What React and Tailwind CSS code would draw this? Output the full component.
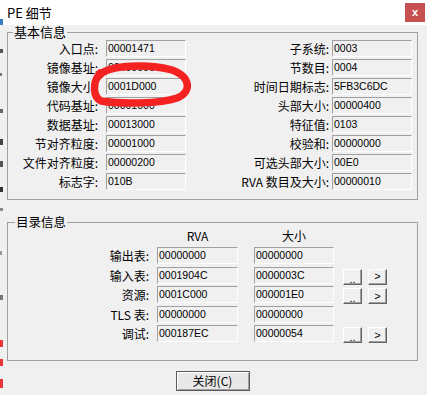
const cjk = { fontFamily: '"Noto Sans CJK SC", "Liberation Sans", sans-serif' };
const num = { fontFamily: '"Liberation Sans", Arial, sans-serif' };

const basic = [
  ["入口点:", "00001471", "子系统:", "0003"],
  ["镜像基址:", "00400000", "节数目:", "0004"],
  ["镜像大小:", "0001D000", "时间日期标志:", "5FB3C6DC"],
  ["代码基址:", "00001000", "头部大小:", "00000400"],
  ["数据基址:", "00013000", "特征值:", "0103"],
  ["节对齐粒度:", "00001000", "校验和:", "00000000"],
  ["文件对齐粒度:", "00000200", "可选头部大小:", "00E0"],
  ["标志字:", "010B", "RVA 数目及大小:", "00000010"],
];

const dirs = [
  { name: "输出表:", rva: "00000000", size: "00000000", btn: false },
  { name: "输入表:", rva: "0001904C", size: "0000003C", btn: true },
  { name: "资源:", rva: "0001C000", size: "000001E0", btn: true },
  { name: "TLS 表:", rva: "00000000", size: "00000000", btn: false },
  { name: "调试:", rva: "000187EC", size: "00000054", btn: true },
];

function Field({ value, w = "w-[80px]" }) {
  return (
    <div
      className={`${w} h-[17px] shrink-0 bg-[#f0f0f0] border-t border-l border-[#a0a0a0] border-r-white border-b-white border-r border-b pl-[1px] text-[10.5px] leading-[15px] text-black`}
      style={num}
    >
      {value}
    </div>
  );
}

function SmallButton({ children, dots }) {
  return (
    <div
      className={`w-[19px] h-[16px] shrink-0 bg-[#f0f0f0] border border-t-white border-l-white border-b-[#646464] border-r-[#646464] shadow-[inset_-1px_-1px_0_#a0a0a0] flex justify-center text-[11px] text-black ${
        dots ? "items-end leading-[10px]" : "items-center leading-none"
      }`}
      style={num}
    >
      {children}
    </div>
  );
}

export default function App() {
  return (
    <div className="relative w-[427px] h-[395px] bg-[#f0f0f0] flex overflow-hidden" style={cjk}>
      {/* bits of the window behind */}
      <div className="w-[5px] shrink-0 flex flex-col bg-[#f0f0f0]">
        <div className="h-[25px] bg-white flex flex-col">
          <div className="mt-[19px] w-[3px] h-[6px] bg-[#3a7bc8]" />
        </div>
        <div className="mt-[24px] w-[3px] h-[4px] bg-[#555]" />
        <div className="mt-[20px] w-[2px] h-[3px] bg-[#777]" />
        <div className="mt-[33px] w-[3px] h-[4px] bg-[#666]" />
        <div className="mt-[26px] w-[3px] h-[6px] bg-[#444]" />
        <div className="mt-[16px] w-[3px] h-[6px] bg-[#555]" />
        <div className="mt-[20px] w-[3px] h-[5px] bg-[#333]" />
        <div className="mt-[16px] w-[3px] h-[3px] bg-[#888]" />
        <div className="mt-[40px] w-[2px] h-[4px] bg-[#999]" />
        <div className="mt-[40px] w-[3px] h-[5px] bg-[#777]" />
        <div className="mt-[40px] w-[3px] h-[7px] bg-[#e8383b]" />
        <div className="mt-[12px] w-[3px] h-[7px] bg-[#e8383b]" />
        <div className="mt-[13px] w-[3px] h-[9px] bg-[#e8383b]" />
      </div>

      <div className="flex-1 flex flex-col">
        {/* title bar */}
        <div className="h-[25px] bg-white flex items-center justify-between pl-[2px] pr-[2px]">
          <span className="text-[13px] text-black leading-none">PE 细节</span>
          <div className="w-[20px] h-[19px] bg-[#c75050] flex items-center justify-center text-white text-[11px] font-bold leading-none" style={num}>
            x
          </div>
        </div>

        <div className="pl-[2px] pr-[9px] flex flex-col">
          {/* 基本信息 */}
          <fieldset className="border border-[#a0a0a0] p-0 m-0">
            <legend className="ml-[5px] px-[1px] text-[13px] leading-[14px] text-black">基本信息</legend>
            <div className="pt-[1px] pb-[7px] flex flex-col">
              {basic.map((r) => (
                <div key={r[0]} className="h-[19px] flex items-start">
                  <div className="w-[90px] h-[17px] text-right text-[12px] leading-[17px] text-black shrink-0">{r[0]}</div>
                  <div className="w-[8px] shrink-0" />
                  <Field value={r[1]} />
                  <div className="w-[143px] h-[17px] text-right text-[12px] leading-[17px] text-black shrink-0">{r[2]}</div>
                  <div className="w-[3px] shrink-0" />
                  <Field value={r[3]} />
                </div>
              ))}
            </div>
          </fieldset>

          {/* 目录信息 */}
          <fieldset className="mt-[15px] border border-[#a0a0a0] p-0 m-0">
            <legend className="ml-[7px] px-[1px] text-[12.5px] leading-[14px] text-black">目录信息</legend>
            <div className="flex flex-col pb-[15px]">
              <div className="h-[14px] flex text-[12px] leading-[14px] text-black">
                <div className="w-[149px] shrink-0" />
                <div className="w-[81px] text-center shrink-0">RVA</div>
                <div className="w-[16px] shrink-0" />
                <div className="w-[80px] text-center shrink-0">大小</div>
              </div>
              <div className="mt-[4px] flex flex-col">
                {dirs.map((d) => (
                  <div key={d.name} className="h-[19.5px] flex items-start">
                    <div className="w-[141px] h-[17px] text-right text-[12px] leading-[17px] text-black shrink-0">{d.name}</div>
                    <div className="w-[8px] shrink-0" />
                    <Field value={d.rva} w="w-[81px]" />
                    <div className="w-[16px] shrink-0" />
                    <Field value={d.size} />
                    {d.btn && (
                      <div className="ml-[9px] mt-[2px] flex gap-[6px]">
                        <SmallButton dots>..</SmallButton>
                        <SmallButton>&gt;</SmallButton>
                      </div>
                    )}
                  </div>
                ))}
              </div>
            </div>
          </fieldset>

          <div className="mt-[10px] flex justify-center">
            <div className="w-[74px] h-[20px] bg-[#e8e8e8] border border-[#5a5a5a] shadow-[inset_1px_1px_0_#fff,inset_-1px_-1px_0_#a0a0a0] flex items-center justify-center text-[12px] leading-none text-black">
              关闭(C)
            </div>
          </div>
        </div>
      </div>

      {/* red marker annotation */}
      <svg className="absolute left-0 top-0 pointer-events-none" width="427" height="395" viewBox="0 0 427 395">
        <path
          d="M 99 76 C 108 64, 150 64, 172 70 C 191 77, 192 92, 177 98 C 160 104, 120 104, 101 101 C 93 97, 92 83, 100 73"
          fill="none"
          stroke="#f52222"
          strokeWidth="7.5"
          strokeLinecap="round"
          strokeLinejoin="round"
        />
      </svg>
    </div>
  );
}
